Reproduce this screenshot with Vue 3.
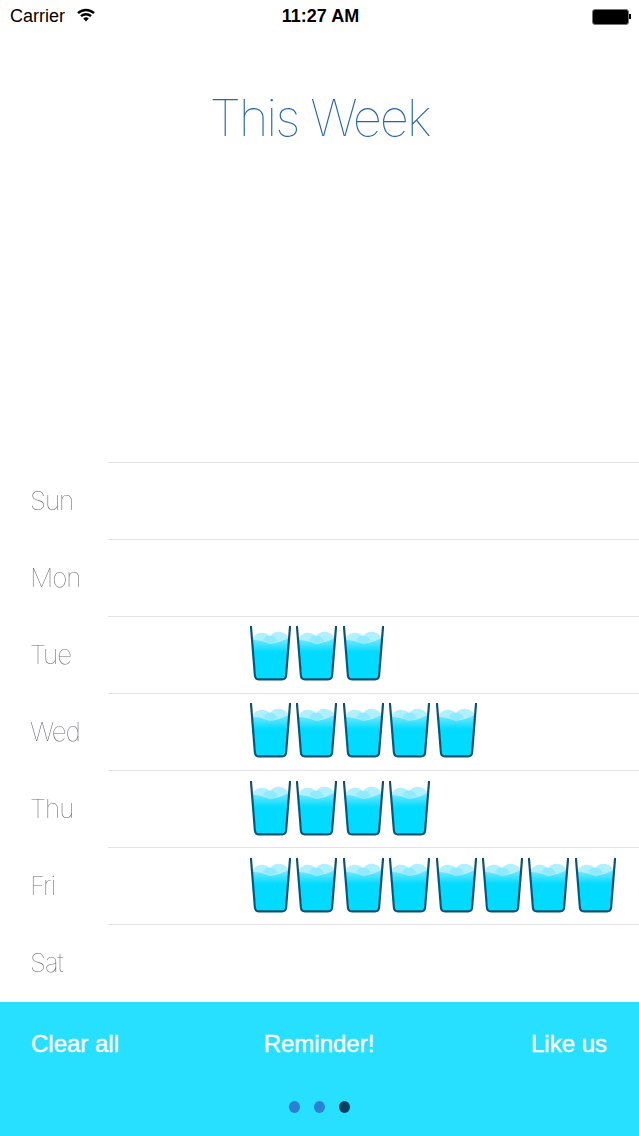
<template>
  <div class="screen">
    <div class="status-bar">
      <div class="status-left">
        <span>Carrier</span>
        <svg class="wifi" width="18" height="14" viewBox="0 0 18 14">
          <path d="M1 5.2 A11.5 11.5 0 0 1 17 5.2" fill="none" stroke="#000" stroke-width="2.4" />
          <path d="M4 8.2 A7.3 7.3 0 0 1 14 8.2" fill="none" stroke="#000" stroke-width="2.4" />
          <path d="M9 13.5 L6.2 10.6 A4 4 0 0 1 11.8 10.6 Z" fill="#000" />
        </svg>
      </div>
      <span class="time">11:27 AM</span>
      <div class="battery">
        <div class="battery-body"></div>
        <div class="battery-nub"></div>
      </div>
    </div>

    <h1 class="title">This Week</h1>

    <div class="chart">
      <div v-for="day in days" :key="day.name" class="row">
        <div class="label">{{ day.name }}</div>
        <div :class="['track', { low: day.low }]">
          <svg
            v-for="n in day.glasses"
            :key="n"
            class="glass"
            width="41"
            height="55"
            viewBox="0 0 41 55"
          >
            <defs>
              <linearGradient id="water" x1="0" y1="15" x2="0" y2="26" gradientUnits="userSpaceOnUse">
                <stop offset="0" stop-color="#63e6fd" />
                <stop offset="1" stop-color="#00dbff" />
              </linearGradient>
            </defs>
            <path d="M2 13 C5 7 13 4 20 10 C25 4 34 4 39 12 L38.6 20 L2.6 20 Z" fill="#b0f0fe" />
            <path d="M13 14 C15 10 18 9 20 10 C23 9 26 11 28 15 L20 18 Z" fill="#8feafe" />
            <path d="M2.2 14 C8 14 13 15 20 18 C27 17 33 15 38.8 12 L35 53 L6 53 Z" fill="url(#water)" />
            <path
              d="M1 1 L4.9 49.5 Q5.3 53.4 9 53.4 L32 53.4 Q35.7 53.4 36.1 49.5 L40 1"
              fill="none"
              stroke="#0e5375"
              stroke-width="2.2"
              stroke-linecap="square"
            />
          </svg>
        </div>
      </div>
    </div>

    <div class="footer">
      <div class="actions">
        <span>Clear all</span>
        <span>Reminder!</span>
        <span class="like">Like us</span>
      </div>
      <div class="dots">
        <i class="dot"></i>
        <i class="dot"></i>
        <i class="dot current"></i>
      </div>
    </div>
  </div>
</template>

<script setup>
const days = [
  { name: 'Sun', glasses: 0 },
  { name: 'Mon', glasses: 0 },
  { name: 'Tue', glasses: 3 },
  { name: 'Wed', glasses: 5 },
  { name: 'Thu', glasses: 4, low: true },
  { name: 'Fri', glasses: 8, low: true },
  { name: 'Sat', glasses: 0 }
]
</script>

<style>
html,
body {
  margin: 0;
  background: #fff;
}
</style>

<style scoped>
.screen {
  width: 639px;
  height: 1136px;
  display: flex;
  flex-direction: column;
  background: #fff;
  overflow: hidden;
  font-family: "Liberation Sans", Arial, sans-serif;
}
.status-bar {
  height: 33px;
  display: grid;
  grid-template-columns: 1fr auto 1fr;
  align-items: center;
  padding: 0 8px 0 10px;
  font-size: 18px;
  color: #000;
}
.status-left {
  display: flex;
  align-items: center;
  gap: 12px;
}
.wifi {
  margin-top: -3px;
}
.time {
  font-weight: bold;
}
.battery {
  display: flex;
  align-items: center;
  justify-self: end;
}
.battery-body {
  width: 35px;
  height: 14px;
  background: #000;
  border: 1px solid #777;
  border-radius: 3px;
}
.battery-nub {
  width: 2px;
  height: 5px;
  background: #000;
}
.title {
  margin: 54px 0 0;
  height: 375px;
  text-align: center;
  font-family: Inter, Roboto, sans-serif;
  font-weight: 100;
  font-size: 51px;
  line-height: 62px;
  letter-spacing: -2.2px;
  color: #2566b2;
  will-change: transform;
}
.chart {
  flex: 1;
}
.row {
  height: 77px;
  display: flex;
}
.label {
  width: 108px;
  box-sizing: border-box;
  padding: 21px 0 0 30px;
  font-family: Inter, Roboto, sans-serif;
  font-weight: 100;
  font-size: 26px;
  line-height: 36px;
  letter-spacing: -1px;
  color: #6f6c74;
  will-change: transform;
}
.track {
  flex: 1;
  box-sizing: border-box;
  display: flex;
  gap: 5.4px;
  padding: 9px 0 0 142px;
  border-top: 1px solid #e3e3e5;
}
.track.low {
  padding-top: 10px;
}
.glass {
  flex: none;
}
.footer {
  height: 134px;
  background: #27e0ff;
  color: #fff;
}
.actions {
  display: grid;
  grid-template-columns: 1fr auto 1fr;
  padding: 27px 32px 0 31px;
  font-size: 24px;
  line-height: 30px;
  -webkit-text-stroke: 0.4px #fff;
}
.like {
  justify-self: end;
}
.dots {
  display: flex;
  justify-content: center;
  gap: 14px;
  margin-top: 42px;
}
.dot {
  width: 11px;
  height: 12px;
  border-radius: 50%;
  background: #2a80d2;
}
.dot.current {
  background: #0b3f5f;
}
</style>
